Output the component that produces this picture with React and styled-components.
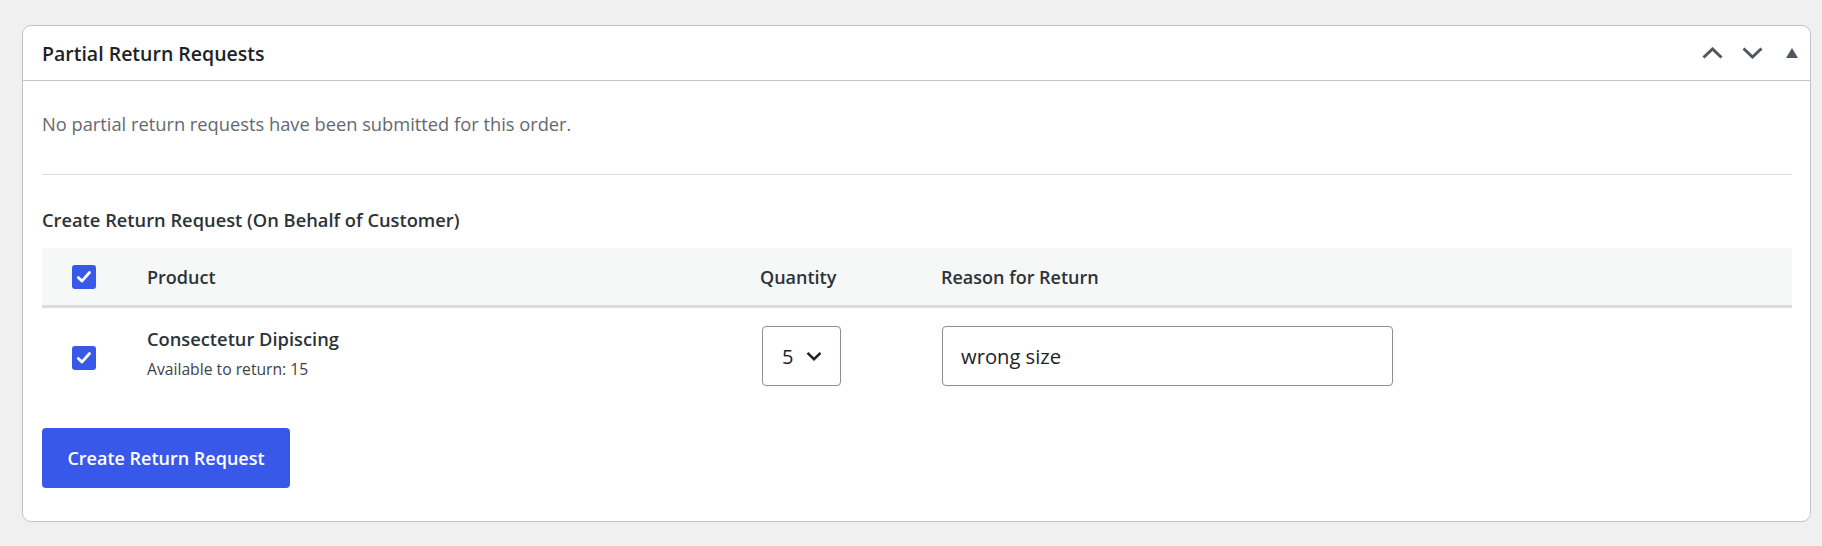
import styled, { createGlobalStyle } from 'styled-components';

const GlobalStyle = createGlobalStyle`
  html, body {
    margin: 0;
    padding: 0;
    background: #f0f0f1;
    font-family: "Open Sans", "Noto Sans", sans-serif;
    color: #3c434a;
  }
`;

function CheckMark() {
  return (
    <svg width="18" height="18" viewBox="0 0 18 18" fill="none">
      <path d="M3.3 9.6l3.6 3.5 7.6-8.6" stroke="#fff" strokeWidth="2.8" strokeLinecap="round" strokeLinejoin="round" />
    </svg>
  );
}

function Chevron({ up }) {
  return (
    <svg width="21" height="12" viewBox="0 0 21 12" fill="none">
      <path
        d={up ? 'M1.5 10.5l9-8.5 9 8.5' : 'M1.5 1.5l9 8.5 9-8.5'}
        stroke="#50575e"
        strokeWidth="3"
      />
    </svg>
  );
}

function App() {
  return (
    <>
      <GlobalStyle />
      <Page>
        <Card>
          <CardHeader>
            <Title>Partial Return Requests</Title>
            <HeaderActions>
              <IconButton><Chevron up /></IconButton>
              <IconButton $gap={19}><Chevron /></IconButton>
              <IconButton $gap={23}>
                <svg width="12" height="10" viewBox="0 0 12 10">
                  <path d="M6 0l6 10H0z" fill="#50575e" />
                </svg>
              </IconButton>
            </HeaderActions>
          </CardHeader>

          <CardBody>
            <Notice>No partial return requests have been submitted for this order.</Notice>
            <Divider />
            <SectionTitle>Create Return Request (On Behalf of Customer)</SectionTitle>

            <Table>
              <HeadRow>
                <CheckCell><Checkbox><CheckMark /></Checkbox></CheckCell>
                <HeadCell>Product</HeadCell>
                <HeadCell>Quantity</HeadCell>
                <HeadCell>Reason for Return</HeadCell>
              </HeadRow>
              <BodyRow>
                <CheckCell><Checkbox $shift={4}><CheckMark /></Checkbox></CheckCell>
                <ProductCell>
                  <ProductName>Consectetur Dipiscing</ProductName>
                  <Available>Available to return: 15</Available>
                </ProductCell>
                <Cell>
                  <Select>
                    <span>5</span>
                    <svg width="16" height="10" viewBox="0 0 16 10" fill="none">
                      <path d="M1.5 1.8l6.5 6.4 6.5-6.4" stroke="#1d2327" strokeWidth="2.5" />
                    </svg>
                  </Select>
                </Cell>
                <Cell>
                  <ReasonInput defaultValue="wrong size" />
                </Cell>
              </BodyRow>
            </Table>

            <PrimaryButton>Create Return Request</PrimaryButton>
          </CardBody>
        </Card>
      </Page>
    </>
  );
}

export default App;

const Page = styled.div`
  padding: 25px 11px 26px 22px;
`;

const Card = styled.section`
  background: #fff;
  border: 1px solid #c3c4c7;
  border-radius: 9px;
  overflow: hidden;
`;

const CardHeader = styled.header`
  display: flex;
  align-items: center;
  justify-content: space-between;
  height: 54px;
  padding: 0 12px 0 19px;
  border-bottom: 1px solid #c3c4c7;
`;

const Title = styled.h2`
  margin: 0;
  font-size: 19.5px;
  font-weight: 600;
  color: #1d2327;
  padding-top: 1px;
`;

const HeaderActions = styled.div`
  display: flex;
  align-items: center;
`;

const IconButton = styled.span`
  display: flex;
  align-items: center;
  justify-content: center;
  margin-left: ${p => p.$gap || 0}px;
`;

const CardBody = styled.div`
  padding: 29px 18px 33px 19px;
`;

const Notice = styled.p`
  margin: 0;
  font-size: 18.3px;
  line-height: 27px;
  color: #646970;
`;

const Divider = styled.hr`
  border: 0;
  border-top: 1px solid #dcdcde;
  margin: 37px 0 31px;
`;

const SectionTitle = styled.h3`
  margin: 0 0 15px;
  font-size: 18.3px;
  line-height: 27px;
  font-weight: 600;
  color: #2c3338;
`;

const Table = styled.div`
  display: grid;
  grid-template-columns: 105px 613px 181px 1fr;
`;

const HeadRow = styled.div`
  display: contents;
  & > * {
    background: #f6f7f7;
    height: 57px;
    border-bottom: 3px solid #dcdcde;
  }
`;

const BodyRow = styled.div`
  display: contents;
  & > * {
    height: 96px;
  }
`;

const Cell = styled.div`
  display: flex;
  align-items: center;
`;

const CheckCell = styled(Cell)`
  padding-left: 30px;
`;

const HeadCell = styled(Cell)`
  font-size: 18px;
  font-weight: 600;
  color: #2c3338;
`;

const ProductCell = styled.div`
  display: flex;
  flex-direction: column;
  box-sizing: border-box;
  padding-top: 18px;
`;

const ProductName = styled.div`
  font-size: 18.3px;
  font-weight: 600;
  color: #2c3338;
  line-height: 26px;
`;

const Available = styled.div`
  margin-top: 7px;
  font-size: 15.7px;
  color: #3c434a;
  line-height: 20px;
`;

const Checkbox = styled.span`
  display: flex;
  align-items: center;
  justify-content: center;
  width: 24px;
  height: 24px;
  margin-top: ${p => p.$shift || 0}px;
  border-radius: 3px;
  background: #3858e9;
`;

const Select = styled.div`
  display: flex;
  align-items: center;
  gap: 13px;
  box-sizing: border-box;
  width: 79px;
  height: 60px;
  margin-left: 2px;
  padding-left: 19px;
  border: 1px solid #8c8f94;
  border-radius: 4px;
  font-size: 20px;
  color: #1d2327;
`;

const ReasonInput = styled.input`
  box-sizing: border-box;
  width: 451px;
  height: 60px;
  margin-left: 1px;
  padding: 0 18px;
  border: 1px solid #8c8f94;
  border-radius: 4px;
  font-family: inherit;
  font-size: 20.2px;
  color: #1d2327;
  outline: none;
`;

const PrimaryButton = styled.button`
  display: block;
  margin-top: 24px;
  height: 60px;
  width: 248px;
  border: 0;
  border-radius: 4px;
  background: #3858e9;
  color: #fff;
  font-family: inherit;
  font-size: 18px;
  font-weight: 600;
`;
